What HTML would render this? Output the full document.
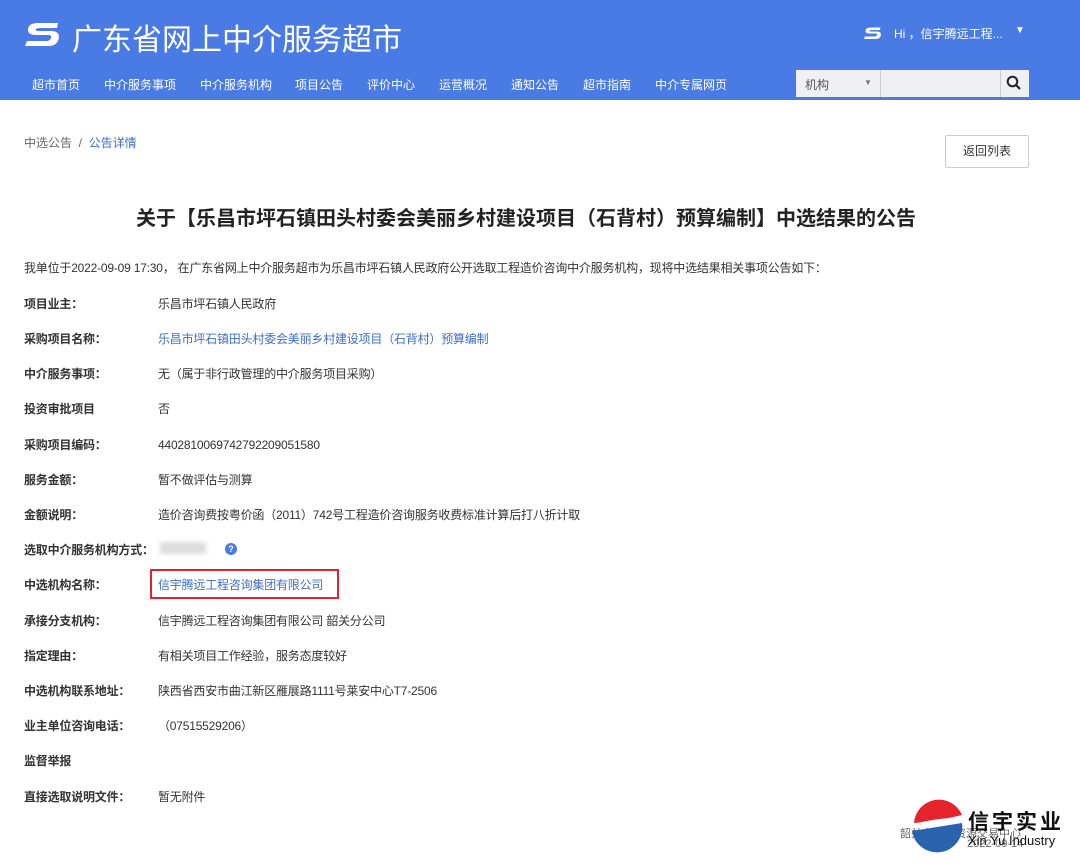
<!DOCTYPE html>
<html><head><meta charset="utf-8"><style>
*{margin:0;padding:0;box-sizing:border-box}
body{width:1080px;height:868px;background:#fff;font-family:"Liberation Sans","Noto Sans CJK SC",sans-serif;position:relative;overflow:hidden;color:#333}
.hdr{position:absolute;left:0;top:0;width:1080px;height:100px;background:#4a7ae3}
.abs{position:absolute;white-space:nowrap}
.nav{top:76px;font-size:12px;color:#fff}
.row{position:absolute;left:24px;font-size:12px;color:#333;white-space:nowrap;letter-spacing:-0.2px}
.row b{font-weight:bold;display:inline-block;width:134px}
.lnk{color:#3d6ec9}
</style></head><body>
<div class="hdr">
<svg class="abs" style="left:24px;top:20px" width="38" height="28" viewBox="0 0 38 28"><path d="M34 3 H14 Q4 3 4 10 Q4 15 12 15 H25 Q28 15 27 18 Q26 21 22 21 H3 L1 26 H24 Q34 26 35 17 Q35 11 27 11 H14 Q11 11 12 9 Q13 8 16 8 H33 Z" fill="#fff"/></svg>
<div class="abs" style="left:72px;top:15px;font-size:30px;color:#fff">广东省网上中介服务超市</div>
<svg class="abs" style="left:863px;top:26px" width="20" height="14" viewBox="0 0 38 28"><path d="M34 3 H14 Q4 3 4 10 Q4 15 12 15 H25 Q28 15 27 18 Q26 21 22 21 H3 L1 26 H24 Q34 26 35 17 Q35 11 27 11 H14 Q11 11 12 9 Q13 8 16 8 H33 Z" fill="#fff"/></svg>
<div class="abs" style="left:894px;top:25px;font-size:12px;color:#fff">Hi ，信宇腾远工程...</div>
<div class="abs" style="left:1015px;top:25px;font-size:10px;color:#fff">▼</div>
<div class="abs nav" style="left:32px">超市首页</div>
<div class="abs nav" style="left:104px">中介服务事项</div>
<div class="abs nav" style="left:200px">中介服务机构</div>
<div class="abs nav" style="left:295px">项目公告</div>
<div class="abs nav" style="left:367px">评价中心</div>
<div class="abs nav" style="left:439px">运营概况</div>
<div class="abs nav" style="left:511px">通知公告</div>
<div class="abs nav" style="left:583px">超市指南</div>
<div class="abs nav" style="left:655px">中介专属网页</div>
<div class="abs" style="left:796px;top:70px;width:233px;height:27px;background:#eef0f3"></div>
<div class="abs" style="left:880px;top:70px;width:1px;height:27px;background:#ccc"></div>
<div class="abs" style="left:1000px;top:70px;width:1px;height:27px;background:#ccc"></div>
<div class="abs" style="left:805px;top:76px;font-size:12px;color:#555">机构</div>
<div class="abs" style="left:864px;top:78px;font-size:8px;color:#777">▼</div>
<svg class="abs" style="left:1006px;top:75px" width="16" height="16" viewBox="0 0 16 16"><circle cx="6.5" cy="6.5" r="4.8" fill="none" stroke="#222" stroke-width="2"/><path d="M10 10 L14 14" stroke="#222" stroke-width="2.2"/></svg>
</div>
<div class="abs" style="left:24px;top:134px;font-size:12px;color:#666">中选公告 &nbsp;/&nbsp; <span class="lnk">公告详情</span></div>
<div class="abs" style="left:945px;top:135px;width:84px;height:33px;border:1px solid #ccc;border-radius:2px;font-size:12px;color:#333;text-align:center;line-height:31px">返回列表</div>
<div class="abs" style="left:0;width:1052px;text-align:center;top:202px;font-size:20px;font-weight:bold;color:#222">关于【乐昌市坪石镇田头村委会美丽乡村建设项目（石背村）预算编制】中选结果的公告</div>
<div class="row" style="top:259px">我单位于2022-09-09 17:30， 在广东省网上中介服务超市为乐昌市坪石镇人民政府公开选取工程造价咨询中介服务机构，现将中选结果相关事项公告如下：</div>
<div class="row" style="top:295px"><b>项目业主：</b>乐昌市坪石镇人民政府</div>
<div class="row" style="top:330px"><b>采购项目名称：</b><span class="lnk">乐昌市坪石镇田头村委会美丽乡村建设项目（石背村）预算编制</span></div>
<div class="row" style="top:365px"><b>中介服务事项：</b>无（属于非行政管理的中介服务项目采购）</div>
<div class="row" style="top:400px"><b>投资审批项目</b>否</div>
<div class="row" style="top:436px"><b>采购项目编码：</b>440281006974279220905158​0</div>
<div class="row" style="top:471px"><b>服务金额：</b>暂不做评估与测算</div>
<div class="row" style="top:506px"><b>金额说明：</b>造价咨询费按粤价函（2011）742号工程造价咨询服务收费标准计算后打八折计取</div>
<div class="row" style="top:541px"><b>选取中介服务机构方式：</b></div>
<div class="abs" style="left:160px;top:542px;width:46px;height:12px;background:#ddd;filter:blur(2px)"></div>
<div class="abs" style="left:225px;top:543px;width:12px;height:12px;border-radius:50%;background:#4a7ae3;color:#fff;font-size:9px;text-align:center;line-height:12px;font-weight:bold">?</div>
<div class="row" style="top:576px"><b>中选机构名称：</b><span class="lnk">信宇腾远工程咨询集团有限公司</span></div>
<div class="abs" style="left:150px;top:569px;width:189px;height:30px;border:2px solid #e0252a"></div>
<div class="row" style="top:612px"><b>承接分支机构：</b>信宇腾远工程咨询集团有限公司 韶关分公司</div>
<div class="row" style="top:647px"><b>指定理由：</b>有相关项目工作经验，服务态度较好</div>
<div class="row" style="top:682px"><b>中选机构联系地址：</b>陕西省西安市曲江新区雁展路1111号莱安中心T7-2506</div>
<div class="row" style="top:717px"><b>业主单位咨询电话：</b>（07515529206）</div>
<div class="row" style="top:752px"><b>监督举报</b></div>
<div class="row" style="top:788px"><b>直接选取说明文件：</b>暂无附件</div>
<div class="abs" style="left:900px;top:825px;font-size:11px;color:#666">韶关市公共资源交易中心</div>
<div class="abs" style="left:967px;top:838px;font-size:11px;color:#666">2022-09-14</div>
<svg class="abs" style="left:906px;top:797px" width="60" height="58" viewBox="0 0 60 58"><path d="M8 26 A25 25 0 0 1 56 18 L30 24 Z" fill="#e5232b"/><path d="M6 34 L56 26 A25 25 0 0 1 6 34 Z" fill="#2a62ae"/><path d="M2 30 Q30 22 58 22" stroke="#fff" stroke-width="3" fill="none"/></svg>
<div class="abs" style="left:968px;top:806px;font-size:21px;font-weight:bold;color:#111;letter-spacing:3px">信宇实业</div>
<div class="abs" style="left:968px;top:833px;font-size:13px;color:#111">Xin Yu Industry</div>
</body></html>
